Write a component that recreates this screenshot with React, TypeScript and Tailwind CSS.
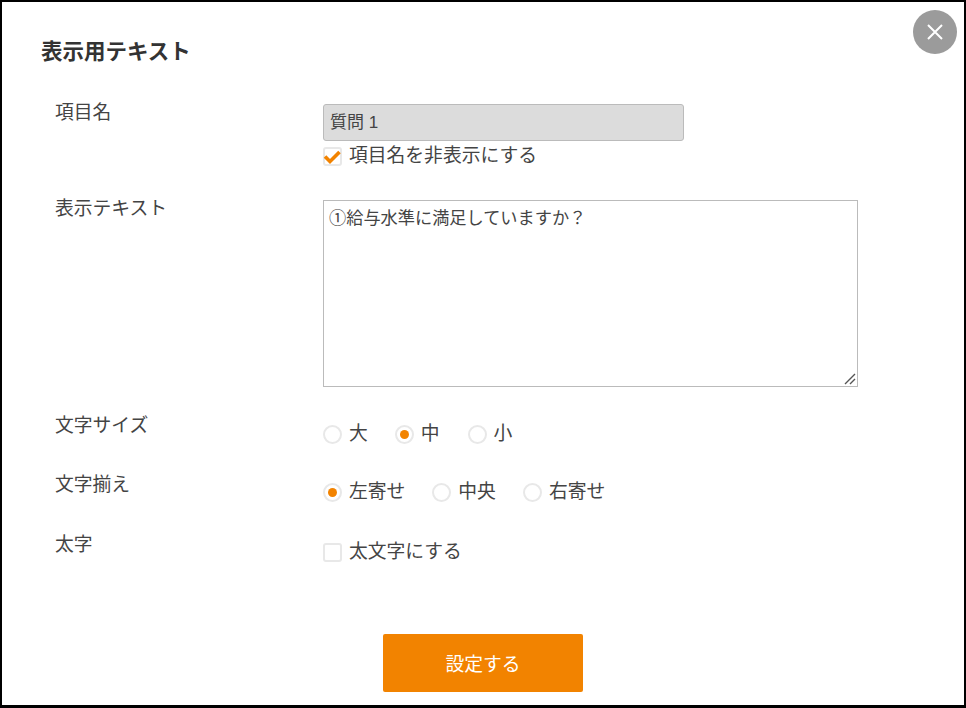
const fontStack = '[font-family:"Liberation_Sans","Noto_Sans_CJK_JP",sans-serif]';

function Radio({ label, checked = false, className = '' }: { label: string; checked?: boolean; className?: string }) {
  return (
    <label className={`flex items-center gap-[7px] ${className}`}>
      <span className="flex h-[19px] w-[19px] items-center justify-center rounded-full border-2 border-[#e8e8e8] bg-white">
        {checked && <span className="h-[9px] w-[9px] rounded-full bg-[#f28300]" />}
      </span>
      <span>{label}</span>
    </label>
  );
}

function Check({ label, checked = false }: { label: string; checked?: boolean }) {
  return (
    <label className="flex items-center gap-[7px]">
      <span className="flex h-[19px] w-[19px] items-center justify-center rounded-[3px] border-2 border-[#e8e8e8] bg-white">
        {checked && (
          <svg viewBox="0 0 19 19" className="h-[19px] w-[19px] shrink-0" fill="none">
            <path d="M2 9.5 L7 14.5 L16.5 5" stroke="#f28300" strokeWidth="3.6" />
          </svg>
        )}
      </span>
      <span>{label}</span>
    </label>
  );
}

function App() {
  return (
    <div className={`relative h-[708px] w-[966px] overflow-hidden border-2 border-b-[3px] border-black bg-white text-[18.8px] leading-[28px] text-[#444] ${fontStack}`}>
      {/* Close */}
      <button className="absolute right-[7px] top-[8px] flex h-[44px] w-[44px] items-center justify-center rounded-full bg-[#9b9b9b]">
        <svg viewBox="0 0 18 18" className="h-[18px] w-[18px]" stroke="white" strokeWidth="2">
          <path d="M2 2 L16 16 M16 2 L2 16" />
        </svg>
      </button>

      <h1 className="ml-[39px] mt-[36px] text-[21.5px] font-bold leading-[28px] text-[#333]">表示用テキスト</h1>

      <div className="ml-[53px] mt-[38px] grid grid-cols-[268px_535px]">
        <div className="-mt-[5px]">項目名</div>
        <div>
          <input
            disabled
            value="質問 1"
            className="block h-[37px] w-[361px] rounded-[3px] border border-[#bbb] bg-[#dcdcdc] px-[6px] pb-[4px] text-[17px] text-[#444]"
          />
          <div className="mt-[1px]">
            <Check label="項目名を非表示にする" checked />
          </div>
        </div>

        <div className="mt-[25px]">表示テキスト</div>
        <div className="relative mt-[30px] h-[187px] w-[535px]">
          <textarea
            readOnly
            defaultValue="①給与水準に満足していますか？"
            className="block h-full w-full resize-none border border-[#bbb] bg-white px-[5px] py-[3px] text-[17.2px] text-[#444] outline-none"
          />
          {/* resize grip */}
          <svg viewBox="0 0 12 12" className="absolute bottom-[2px] right-[2px] h-[12px] w-[12px]" stroke="#555" strokeWidth="1.4">
            <path d="M1 11 L11 1 M6 11 L11 6" />
          </svg>
        </div>

        <div className="mt-[25px]">文字サイズ</div>
        <div className="mt-[33px] flex">
          <Radio label="大" className="mr-[27px]" />
          <Radio label="中" checked className="mr-[28px]" />
          <Radio label="小" />
        </div>

        <div className="mt-[23px]">文字揃え</div>
        <div className="mt-[30px] flex">
          <Radio label="左寄せ" checked className="mr-[27px]" />
          <Radio label="中央" className="mr-[27px]" />
          <Radio label="右寄せ" />
        </div>

        <div className="mt-[25px]">太字</div>
        <div className="mt-[32px]">
          <Check label="太文字にする" />
        </div>
      </div>

      <div className="mt-[68px] flex pl-[381px]">
        <button className="h-[58px] w-[200px] rounded-[2px] bg-[#f28300] pt-[3px] text-white">設定する</button>
      </div>
    </div>
  );
}

export default App;
